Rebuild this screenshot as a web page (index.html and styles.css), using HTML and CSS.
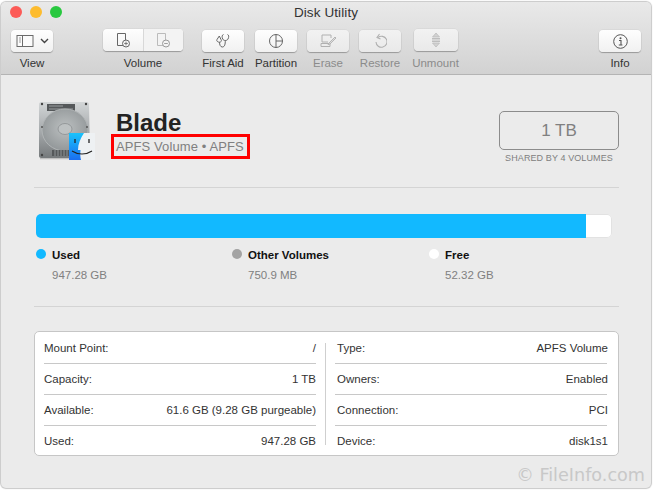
FILE: index.html
```html
<!DOCTYPE html>
<html lang="en">
<head>
<meta charset="utf-8">
<title>Disk Utility</title>
<link rel="stylesheet" href="styles.css">
</head>
<body>
<div class="window">
  <header class="chrome">
    <div class="titlebar">
      <div class="lights"><span class="light red"></span><span class="light yellow"></span><span class="light green"></span></div>
      <div class="title">Disk Utility</div>
    </div>
    <div class="toolbar">
      <div class="tool t-view">
        <div class="btn view-btn">
          <svg width="18" height="14" viewBox="0 0 18 14"><rect x="1" y="1.500" width="16" height="11" fill="#fbfbfb" stroke="#6b6b6b"/><path d="M6.500 1.500v11" stroke="#6b6b6b"/><path d="M3 4h2M3 6h2M3 8h2" stroke="#9a9a9a"/></svg>
          <svg width="9" height="6" viewBox="0 0 9 6"><path d="M1 1l3.500 3.500L8 1" fill="none" stroke="#444" stroke-width="1.400"/></svg>
        </div>
        <div class="label">View</div>
      </div>
      <div class="tool t-volume up">
        <div class="btn split">
          <div class="seg">
            <svg width="16" height="16" viewBox="0 0 16 16"><path d="M2.500 1.500h8v9M2.500 1.500v12h6" fill="none" stroke="#666"/><circle cx="11" cy="11.500" r="3.500" fill="#f4f4f4" stroke="#666"/><path d="M9.200 11.500h3.600M11 9.700v3.600" stroke="#666" stroke-width=".8"/></svg>
          </div>
          <div class="seg">
            <svg width="16" height="16" viewBox="0 0 16 16"><path d="M2.500 1.500h8v9M2.500 1.500v12h6" fill="none" stroke="#bbb"/><circle cx="11" cy="11.500" r="3.500" fill="#f4f4f4" stroke="#999"/><path d="M9.200 11.500h3.600" stroke="#888" stroke-width=".8"/></svg>
          </div>
        </div>
        <div class="label">Volume</div>
      </div>
      <div class="tool t-aid">
        <div class="btn">
          <svg width="16" height="16" viewBox="0 0 16 16"><path d="M8.500 1.500C6.800 2 6.800 4 7.700 6c.9 2 4.300 2 5.300 0 1-2 1-4-.5-4.500" fill="none" stroke="#666"/><path d="M10.300 7.500C10.300 11 9.800 14 7.300 14 5.300 14 4.500 11.500 4.500 9.200" fill="none" stroke="#666"/><path d="M4.300 3L2 6.500C1 8 3 9.300 4.500 9.200 6 9.100 7 8 6 6.500z" fill="none" stroke="#666"/></svg>
        </div>
        <div class="label">First Aid</div>
      </div>
      <div class="tool t-part">
        <div class="btn">
          <svg width="16" height="16" viewBox="0 0 16 16"><circle cx="8" cy="8" r="6.500" fill="none" stroke="#666"/><path d="M8 1.500V14.500M8 8h6.500" stroke="#666"/></svg>
        </div>
        <div class="label">Partition</div>
      </div>
      <div class="tool t-erase off">
        <div class="btn">
          <svg width="17" height="16" viewBox="0 0 17 16"><path d="M2 2h9v3M2 2v7h6M1 10.500h9v3H1z" fill="none" stroke="#b0b0b0"/><path d="M9 10l6-6 1 1-6 6-2 .5z" fill="#ddd" stroke="#aaa" stroke-width=".8"/></svg>
        </div>
        <div class="label">Erase</div>
      </div>
      <div class="tool t-restore off">
        <div class="btn">
          <svg width="14" height="16" viewBox="0 0 14 16"><path d="M4 3.500A5.500 5.500 0 1 1 2 8" transform="translate(1 1)" fill="none" stroke="#b0b0b0" stroke-width="1.100"/><path d="M6.500 1L4 4.500 7.500 6" fill="none" stroke="#b0b0b0" stroke-width="1.100"/></svg>
        </div>
        <div class="label">Restore</div>
      </div>
      <div class="tool t-unmount off up">
        <div class="btn">
          <svg width="10" height="16" viewBox="0 0 10 16"><path d="M5 1L1.500 5h7zM5 15l-3.500-4h7z" fill="#d2d2d2" stroke="#b8b8b8" stroke-width=".7"/><rect x="1" y="6" width="8" height="1.500" fill="#bdbdbd"/><rect x="1" y="8.500" width="8" height="1.500" fill="#bdbdbd"/></svg>
        </div>
        <div class="label">Unmount</div>
      </div>
      <div class="tool t-info">
        <div class="btn">
          <svg width="15" height="15" viewBox="0 0 15 15"><circle cx="7.500" cy="7.500" r="6.800" fill="none" stroke="#555"/><circle cx="7.500" cy="4.300" r="1" fill="#555"/><path d="M6 6.500h2v4.300M5.800 11h3.600" fill="none" stroke="#555" stroke-width="1.100"/></svg>
        </div>
        <div class="label">Info</div>
      </div>
    </div>
  </header>

  <main class="main">
    <section class="head">
      <svg class="disk" width="60" height="60" viewBox="0 0 60 60">
        <defs>
          <linearGradient id="dg" x1="0" y1="0" x2="0" y2="1"><stop offset="0" stop-color="#d3d6d7"/><stop offset=".55" stop-color="#a3a7a9"/><stop offset="1" stop-color="#75797b"/></linearGradient>
          <radialGradient id="pl" cx=".5" cy=".45" r=".65"><stop offset="0" stop-color="#bcc0c1"/><stop offset="1" stop-color="#8b9092"/></radialGradient>
          <linearGradient id="fb" x1="0" y1="0" x2="0" y2="1"><stop offset="0" stop-color="#19c3fb"/><stop offset="1" stop-color="#1a6ef0"/></linearGradient>
        </defs>
        <path d="M3 2h46c1 0 2 1 2 2l1 52c0 1-1 2-2 2H3c-1 0-2-1-2-2L1 4c0-1 1-2 2-2z" fill="url(#dg)"/>
        <rect x="2" y="58" width="49" height="1.300" fill="#c0c0c0"/>
        <rect x="9" y="4" width="28" height="7" fill="#55585a"/>
        <path d="M11 6h14M11 9h24" stroke="#9a9d9f"/>
        <ellipse cx="27" cy="30" rx="23" ry="21" fill="url(#pl)" stroke="#b0b4b5"/>
        <ellipse cx="27" cy="29" rx="7" ry="5.500" fill="#bdc1c2" stroke="#94989a"/>
        <rect x="14" y="50" width="17" height="6" fill="#55585a"/>
        <path d="M17 50v6M20 50v6M23 50v6M26 50v6M29 50v6" stroke="#8f9395"/>
        <circle cx="4" cy="4" r="1.200" fill="#444"/><circle cx="48" cy="4" r="1.200" fill="#444"/><circle cx="4" cy="27" r="1" fill="#555"/><circle cx="49" cy="27" r="1" fill="#555"/><circle cx="4" cy="55" r="1.200" fill="#444"/>
        <rect x="31" y="33" width="26" height="27" fill="url(#fb)"/>
        <path d="M46 33h11v27H43c-.8-3-.8-6-.5-10h-2.500c0-6 2.500-12 6-17z" fill="#eef1f3"/>
        <path d="M37 39v4M51 39v4" stroke="#222" stroke-width="1.300"/>
        <path d="M34 51c6 4 14 4 20 0" fill="none" stroke="#222" stroke-width="1.100"/>
      </svg>
      <div class="name-col">
        <h1 class="name">Blade</h1>
        <div class="kind">APFS Volume • APFS</div>
      </div>
      <div class="cap-col">
        <div class="cap-box">1 TB</div>
        <div class="cap-note">SHARED BY 4 VOLUMES</div>
      </div>
    </section>

    <section class="usage">
      <div class="bar"><div class="bar-used"></div></div>
      <div class="legend">
        <div class="item"><span class="dot d-used"></span><div><div class="item-name">Used</div><div class="item-val">947.28 GB</div></div></div>
        <div class="item"><span class="dot d-other"></span><div><div class="item-name">Other Volumes</div><div class="item-val">750.9 MB</div></div></div>
        <div class="item"><span class="dot d-free"></span><div><div class="item-name">Free</div><div class="item-val">52.32 GB</div></div></div>
      </div>
    </section>

    <section class="details">
      <div class="col">
        <div class="row"><span>Mount Point:</span><span>/</span></div>
        <div class="row"><span>Capacity:</span><span>1 TB</span></div>
        <div class="row"><span>Available:</span><span>61.6 GB (9.28 GB purgeable)</span></div>
        <div class="row"><span>Used:</span><span>947.28 GB</span></div>
      </div>
      <div class="vline"></div>
      <div class="col col-right">
        <div class="row"><span>Type:</span><span>APFS Volume</span></div>
        <div class="row"><span>Owners:</span><span>Enabled</span></div>
        <div class="row"><span>Connection:</span><span>PCI</span></div>
        <div class="row"><span>Device:</span><span>disk1s1</span></div>
      </div>
    </section>
  </main>
  <div class="watermark">© FileInfo.com</div>
</div>
</body>
</html>
```

FILE: styles.css
```css
* { box-sizing: border-box; }
html, body { margin: 0; padding: 0; }
body {
  width: 653px;
  height: 490px;
  background: #fff;
  font-family: "Liberation Sans", Arial, sans-serif;
  overflow: hidden;
  padding: 2px 2px 2px 1px;
}
.window {
  position: relative;
  width: 650px;
  height: 486px;
  background: #ebebeb;
  border-radius: 5px;
  box-shadow: 0 0 1px 1px rgba(0, 0, 0, .22);
  overflow: hidden;
}
.chrome {
  height: 73px;
  background: linear-gradient(#e9e9e9, #d2d2d2);
  border-bottom: 1px solid #b4b4b4;
}
.titlebar {
  position: relative;
  height: 22px;
  display: flex;
  align-items: center;
  justify-content: center;
  padding-bottom: 2px;
}
.lights {
  position: absolute;
  left: 9px;
  top: 4px;
  display: flex;
  gap: 8px;
}
.light { width: 12px; height: 12px; border-radius: 50%; }
.red { background: #fc5b57; }
.yellow { background: #fdbc2e; }
.green { background: #28c83f; }
.title {
  font-size: 13.5px;
  letter-spacing: .1px;
  color: #333;
}
.toolbar {
  display: flex;
  padding: 6px 10px 0 10px;
}
.tool {
  display: flex;
  flex-direction: column;
  align-items: center;
  flex: none;
}
.btn {
  width: 100%;
  height: 22px;
  background: linear-gradient(#fefefe, #f1f1f1);
  border-radius: 4px;
  box-shadow: 0 1px 1px rgba(0, 0, 0, .28), 0 0 0 .5px rgba(0, 0, 0, .06);
  display: flex;
  align-items: center;
  justify-content: center;
}
.label {
  margin-top: 4px;
  font-size: 11.5px;
  line-height: 14px;
  color: #333;
  white-space: nowrap;
}
.off .label { color: #8b8b8b; }
.off .btn { background: linear-gradient(#f2f2f2, #e9e9e9); }
.up .btn { margin-top: -1px; }
.up .label { margin-top: 5px; }
.t-view { width: 42px; }
.t-volume { width: 80px; margin-left: 50px; }
.t-aid { width: 42px; margin-left: 19px; }
.t-part { width: 42px; margin-left: 11px; }
.t-erase { width: 42px; margin-left: 10px; }
.t-restore { width: 42px; margin-left: 10px; }
.t-unmount { width: 44px; margin-left: 13px; }
.t-unmount .label { margin-left: -1px; }
.t-info { width: 42px; margin-left: auto; }
.view-btn { gap: 6px; justify-content: flex-start; padding-left: 5px; }
.split { overflow: hidden; }
.seg {
  flex: 1;
  height: 100%;
  display: flex;
  align-items: center;
  justify-content: center;
}
.seg + .seg { border-left: 1px solid #d8d8d8; background: #f3f3f3; }

.main { padding: 0 32px 0 33px; }
.head {
  display: flex;
  height: 113px;
  border-bottom: 1px solid #d4d4d4;
}
.disk { margin: 25px 0 0 4px; flex: none; }
.name-col { margin: 34px 0 0 18px; }
.name {
  margin: 0;
  font-size: 24px;
  line-height: 28px;
  font-weight: 700;
  color: #222;
}
.kind {
  margin: -3px 0 0 -5px;
  padding: 0 3px 0 2px;
  height: 25px;
  border: 3px solid #f00;
  font-size: 13px;
  line-height: 19px;
  letter-spacing: .1px;
  color: #808080;
  white-space: nowrap;
}
.cap-col { margin: 36px 0 0 auto; width: 120px; }
.cap-box {
  height: 39px;
  padding-top: 1px;
  border: 1px solid #8c8c8c;
  border-radius: 5px;
  display: flex;
  align-items: center;
  justify-content: center;
  font-size: 17px;
  color: #808080;
}
.cap-note {
  margin-top: 3px;
  font-size: 9px;
  line-height: 11px;
  letter-spacing: .1px;
  text-align: center;
  color: #808080;
  white-space: nowrap;
}

.usage {
  height: 119px;
  padding: 26px 0 0 2px;
  border-bottom: 1px solid #d4d4d4;
}
.bar {
  width: 576px;
  height: 24px;
  background: #fff;
  border-radius: 5px;
  overflow: hidden;
  box-shadow: inset 0 0 0 1px #e2e2e2;
}
.bar-used { width: 550px; height: 100%; background: #12b9ff; }
.legend {
  display: grid;
  grid-template-columns: 196px 197px 1fr;
  margin-top: 10px;
}
.item { display: flex; gap: 6px; }
.dot { width: 10px; height: 10px; border-radius: 50%; margin-top: 1px; flex: none; }
.d-used { background: #12b9ff; }
.d-other { background: #a3a3a3; }
.d-free { background: #fff; }
.item-name { font-size: 11.5px; line-height: 14px; font-weight: 700; color: #111; }
.item-val { margin-top: 6px; font-size: 11.5px; line-height: 14px; color: #808080; }

.details {
  display: flex;
  width: 585px;
  height: 125px;
  margin-top: 24px;
  padding-top: 1px;
  background: #fff;
  border: 1px solid #c6c6c6;
  border-radius: 5px;
}
.col { width: 272px; margin-left: 9px; flex: none; }
.vline { width: 1px; margin: 10px 0 10px 9px; background: #cfcfcf; flex: none; }
.row {
  display: flex;
  justify-content: space-between;
  align-items: center;
  height: 31px;
  border-bottom: 1px solid #c8c8c8;
  font-size: 11.5px;
  color: #333;
  white-space: nowrap;
}
.row:last-child { border-bottom: 0; height: 30px; }
.col-right .row { padding-left: 2px; margin-right: 0; }
.col-right .row span:last-child { margin-right: -1px; }

.watermark {
  position: absolute;
  right: 6px;
  bottom: 3px;
  font-family: "DejaVu Sans", sans-serif;
  font-size: 17.6px;
  line-height: 20px;
  color: #c8c8c8;
}
```
